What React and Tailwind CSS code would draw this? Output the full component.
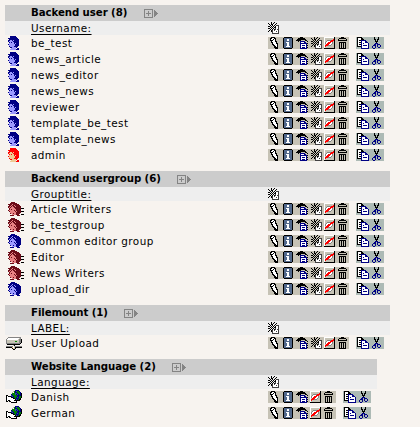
import React from "react";

const PALETTE = {
  K: "#000000", W: "#ffffff", G: "#848484", g: "#c6c3b5", S: "#52698c",
  N: "#000084", R: "#ff0000", Y: "#efcb94", E: "#008200", B: "#3151a5", D: "#424142",
};

const GROUP = [
  "...HHHH........",
  "..HHHHHHH......",
  "HHHHFHHHHHH....",
  ".HHFHHFHHHHH...",
  "HHFHFHHFHHHHH..",
  "HFHFFFHHHHHHH..",
  ".HFFFFFHHHHHHKKK",
  ".HFHFFFFHHHHH..",
  "HFFFFFHFHHHHH..",
  ".HFFFFFHFHHHHKKK",
  "..FFFFFFHHHHH..",
  "..HFFHFFHHHH...",
  "....FFFFHHH..KKK",
  "..HHHH...HHH...",
].map((r) => r.padEnd(16, "."));

const ART = {
  pencil: [
    ".KKKK...",
    "KKWWKK..",
    "KWWKWK..",
    "KKKWWK..",
    ".KWWWKK.",
    ".KKWWWK.",
    "..KWWWKK",
    "..KKWWWK",
    "...KKWWK",
    "....KKWK",
    "....KKKK",
    ".....KKK",
  ],
  info: [
    ".KKKKKKKK.",
    "KSSSSSSSSK",
    "KSSSWWSSSK",
    "KSSSWWSSSK",
    "KSSSSSSSSK",
    "KSSWWWSSSK",
    "KSSSWWSSSK",
    "KSSSWWSSSK",
    "KSSSWWSSSK",
    "KSSWWWWSSK",
    "KSSSSSSSSK",
    ".KKKKKKKK.",
  ],
  history: [
    "....KKK.....",
    "..KKKKKKK...",
    ".KKKKKKKKK..",
    "KKKKK....KK.",
    "..K.NNNNN..K",
    "....NWWWNN..",
    "....NNNNNNNK",
    "....NWWWWWN.",
    "....NWNNNWNK",
    "....NWWWWWN.",
    "....NWNNNWNK",
    "....NNNNNNN.",
  ],
  create: [
    "...K..K....",
    "K..K.K..K..",
    ".K.KK..K...",
    "..K.K.K.DDD",
    "KK.K.K.KWWD",
    "..K.K.KKWWD",
    "KK.K.K.DWWD",
    "..K.K.KDWDD",
    ".K.KDWDWWWD",
    "K..KDWWWDWD",
    "....DWWWWWD",
    "....DDDDDDD",
  ],
  hide: [
    "WWWWWWWWWWK",
    "WgggggggggK",
    "WggggggggRK",
    "WggGGGGRRRK",
    "WgGWWWRRRgK",
    "WGWWRRRWGgK",
    "WGWRRRWWGgK",
    "WgRRRWWGggK",
    "WRRRGGGgggK",
    "WRggggggggK",
    "WgggggggggK",
    "KKKKKKKKKKK",
  ],
  trash: [
    "...KKK...",
    ".KKKKKKK.",
    "K.......K",
    "KKKKKKKKK",
    ".........",
    ".KKKKKKK.",
    ".K.K.K.K.",
    ".K.K.K.K.",
    ".K.K.K.K.",
    ".K.K.K.K.",
    ".K.K.K.K.",
    ".KKKKKKK.",
  ],
  copy: [
    "KKKKK.......",
    "KWWWKK......",
    "KWWWKKK.....",
    "KWKKNNNNN...",
    "KWWWNWWWNN..",
    "KWKKNWWWNNN.",
    "KWWWNWNWWWWN",
    "KWKKNWWWWWWN",
    "KWWWNWNNNNWN",
    "KKKKNWWWWWWN",
    "....NWWWWWWN",
    "....NNNNNNNN",
  ],
  cut: [
    "..K...K..",
    "..K...K..",
    "..KK.KK..",
    "...K.K...",
    "...KKK...",
    "....K....",
    "...NNN...",
    "..NN.NNN.",
    ".NNN.N..N",
    "N..N.N..N",
    "N..N..NN.",
    ".NN......",
  ],
  plus: [
    "GGGGGGGGG.....",
    "G.......G.G...",
    "G...G...G.GG..",
    "G...G...G.GGG.",
    "G.GGGGG.G.GGGG",
    "G...G...G.GGG.",
    "G...G...G.GG..",
    "G.......G.G...",
    "GGGGGGGGG.....",
  ],
  user: [
    "..HHHHHH...",
    "..HHHHHHH..",
    "HHHHHHHHHH.",
    ".HHHHHHHHHH",
    "HHFFHFHHHHH",
    "HFFFFHHHHHH",
    ".HFHFFHHHHH",
    ".FFFFFHFHHH",
    "HFFFFFFHHHH",
    ".FFFFFFHHHH",
    ".HFFFFHHHH.",
    "..HHFFFFH..",
    "...FFFFF.HH",
    "..FFFFFFHHH",
  ],
  group: GROUP,
  member: GROUP.map((r) => r.slice(0, 13)),
  mount: [
    "..GGGGGGGGGGGGG.",
    ".GWWWWWWWWWWWgG.",
    "GWWWWWWWWWWWgGGK",
    "GggggggggggggGGK",
    "GggggggggEEggGGK",
    "GggggggggggggGGK",
    "GGGGGGGGGGGGGGK.",
    ".KKKKKKKKKKKKK..",
    ".......gK.......",
    "GGGGGGGWgGGGGGGG",
    "KKKKKKYWgKKKKKKK",
    "......KYgK......",
    ".......KK.......",
  ],
  globe: [
    ".........NNNN...",
    ".......gENBEEN..",
    "......gWENNEEEN.",
    "......EEEBBNEENK",
    ".....NEEEBNBNENK",
    "KK...BNEEEENNNNK",
    "KWKKKNBNEEENNEEK",
    "KWWWWKKNEENBNEEK",
    "KWWWWWWKKENNNEK.",
    "KWWWWWWWWKBNEKK.",
    "KWKKWWWWKKKKKK..",
    "KK.KKWWWWWK.....",
    ".....KKKKKK.....",
  ],
};

const TONES = {
  blue: { H: "#000084", F: "#9c9aff" },
  red: { H: "#ff0000", F: "#efcb94" },
  maroon: { H: "#6b0c18", F: "#e78284" },
};

function Pixels({ name, tone, className = "" }) {
  const rows = ART[name];
  const colors = { ...PALETTE, ...(TONES[tone] || {}) };
  return (
    <svg width={rows[0].length} height={rows.length} shapeRendering="crispEdges" className={`block shrink-0 ${className}`}>
      {rows.flatMap((row, y) =>
        [...row].map((c, x) => c === "." ? null : <rect key={`${x}-${y}`} x={x} y={y} width="1" height="1" fill={colors[c]} />)
      )}
    </svg>
  );
}

function Tools({ short }) {
  return (
    <div className="flex h-3 items-start">
      <div className={`flex h-3 bg-[#c6c2b5] ${short ? "w-[68px]" : "w-[81px]"}`}>
        <Pixels name="pencil" className="ml-[2px]" />
        <Pixels name="info" className="ml-[5px]" />
        <Pixels name="history" className="ml-[3px]" />
        {!short && <Pixels name="create" className="ml-[3px]" />}
        <Pixels name="hide" className="ml-[2px]" />
        <Pixels name="trash" className="ml-[3px]" />
      </div>
      <div className="ml-[7px] flex h-3 w-7 bg-[#adbab5]">
        <Pixels name="copy" className="ml-px" />
        <Pixels name="cut" className="ml-[3px]" />
      </div>
    </div>
  );
}

const ICON_OFFSET = {
  user: "ml-[3px] mt-px",
  group: "ml-[3px] mt-px",
  member: "ml-[3px] mt-px",
  mount: "ml-px mt-[2px]",
  globe: "ml-px mt-px",
};

function Section({ title, titleWidth, label, items, short }) {
  return (
    <section className={short ? "w-[372px]" : "w-[385px]"}>
      <div className="flex h-4 bg-[#cccccc] pl-[26px] leading-4 font-bold">
        <span className="text-[10.2px] tracking-[-0.07px]" style={{ width: titleWidth }}>{title}</span>
        <Pixels name="plus" className="mt-1" />
      </div>
      <div className="flex h-[14px] bg-[#eeeeee] pl-[26px] leading-[15px]">
        <span className="w-[237px]"><span className="underline underline-offset-2">{label}</span></span>
        <Pixels name="create" className="mt-px" />
      </div>
      {items.map(([text, icon, tone]) => (
        <div key={text} className="flex h-4">
          <div className="w-[26px]">
            <Pixels name={icon} tone={tone} className={ICON_OFFSET[icon]} />
          </div>
          <span className="w-[237px] leading-[17px]">{text}</span>
          <div className="pt-[2px]"><Tools short={short} /></div>
        </div>
      ))}
    </section>
  );
}

const SECTIONS = [
  {
    title: "Backend user (8)", titleWidth: 113, label: "Username:",
    items: [
      ...["be_test", "news_article", "news_editor", "news_news", "reviewer", "template_be_test", "template_news"].map((n) => [n, "user", "blue"]),
      ["admin", "user", "red"],
    ],
  },
  {
    title: "Backend usergroup (6)", titleWidth: 146, label: "Grouptitle:",
    items: [
      ["Article Writers", "group", "maroon"], ["be_testgroup", "group", "maroon"],
      ["Common editor group", "member", "blue"], ["Editor", "group", "maroon"],
      ["News Writers", "group", "maroon"], ["upload_dir", "member", "blue"],
    ],
  },
  { title: "Filemount (1)", titleWidth: 93, label: "LABEL:", items: [["User Upload", "mount"]] },
  { title: "Website Language (2)", titleWidth: 141, label: "Language:", short: true, items: [["Danish", "globe"], ["German", "globe"]] },
];

export default function App() {
  return (
    <main className="flex h-[427px] w-[420px] flex-col gap-2 overflow-hidden bg-[#f7f3ef] pt-[5px] pl-[5px] font-['DejaVu_Sans',sans-serif] text-[10.4px] tracking-[0.45px] whitespace-nowrap text-black">
      {SECTIONS.map((s) => <Section key={s.title} {...s} />)}
    </main>
  );
}
